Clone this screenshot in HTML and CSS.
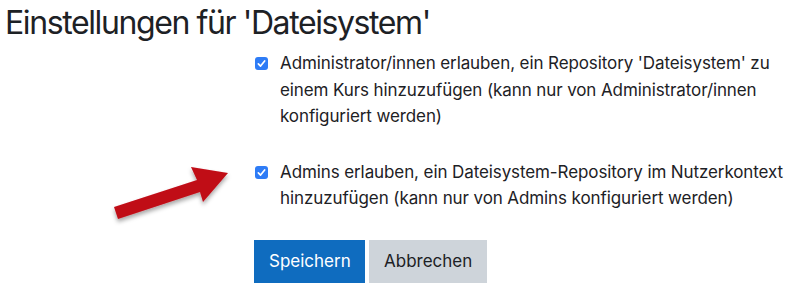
FILE: index.html
```html
<!DOCTYPE html>
<html lang="de">
<head>
    <meta charset="UTF-8">
    <title>Einstellungen für 'Dateisystem'</title>
    <link rel="stylesheet" href="styles.css">
</head>
<body>
    <h2 class="title">Einstellungen für 'Dateisystem'</h2>

    <form class="settings">
        <div class="option">
            <span class="check"><svg viewBox="0 0 14 14"><path d="M3.6 7.4 L6 9.8 L10.4 4.2" /></svg></span>
            <label>Administrator/innen erlauben, ein Repository 'Dateisystem' zu einem Kurs hinzuzufügen (kann nur von Administrator/innen konfiguriert werden)</label>
        </div>
        <div class="option">
            <span class="check"><svg viewBox="0 0 14 14"><path d="M3.6 7.4 L6 9.8 L10.4 4.2" /></svg></span>
            <label>Admins erlauben, ein Dateisystem-Repository im Nutzerkontext hinzuzufügen (kann nur von Admins konfiguriert werden)</label>
        </div>
        <div class="buttons">
            <button type="button" class="btn btn-primary">Speichern</button>
            <button type="button" class="btn btn-secondary">Abbrechen</button>
        </div>
    </form>

    <!-- roter Pfeil -->
    <svg class="arrow" width="140" height="70" viewBox="0 0 140 70">
        <defs>
            <filter id="shadow" x="-20%" y="-20%" width="140%" height="150%">
                <feDropShadow dx="0" dy="3" stdDeviation="2" flood-color="#000" flood-opacity="0.35" />
            </filter>
        </defs>
        <polygon filter="url(#shadow)" fill="#c00a16"
            points="4,47 87,20 81,7 118,13 93,42 90,32 8,59" />
    </svg>
</body>
</html>
```

FILE: styles.css
```css
body {
    margin: 0;
    padding: 0;
    background: #fff;
    color: #1d2125;
    font-family: 'Inter', 'Liberation Sans', sans-serif;
    position: relative;
    height: 294px;
    overflow: hidden;
}

.title {
    margin: 0;
    padding: 2px 0 0 5px;
    font-size: 32px;
    font-weight: 400;
    line-height: 42px;
    letter-spacing: -1.4px;
    color: #1d2125;
}

.settings {
    padding: 6px 0 0 255px;
}

.option {
    display: flex;
    align-items: flex-start;
    gap: 12px;
    margin-bottom: 29px;
}

.option label {
    font-size: 17px;
    line-height: 26.5px;
    letter-spacing: -0.1px;
}

.check {
    flex: none;
    width: 13px;
    height: 13px;
    margin-top: 7px;
    background: #2e7cf6;
    border-radius: 3px;
    display: flex;
}

.check svg {
    width: 13px;
    height: 13px;
}

.check path {
    fill: none;
    stroke: #fff;
    stroke-width: 1.8;
    stroke-linecap: round;
    stroke-linejoin: round;
}

.buttons {
    display: flex;
    gap: 4px;
    margin-top: -1px;
    margin-left: -1px;
}

.btn {
    height: 43px;
    border: none;
    border-radius: 0;
    font-family: inherit;
    font-size: 17px;
    padding: 0 15px;
}

.btn-primary {
    width: 111px;
    background: #0f6cbf;
    color: #fff;
}

.btn-secondary {
    width: 118px;
    background: #ced4da;
    color: #1d2125;
}

.arrow {
    position: absolute;
    left: 110px;
    top: 160px;
}
```
